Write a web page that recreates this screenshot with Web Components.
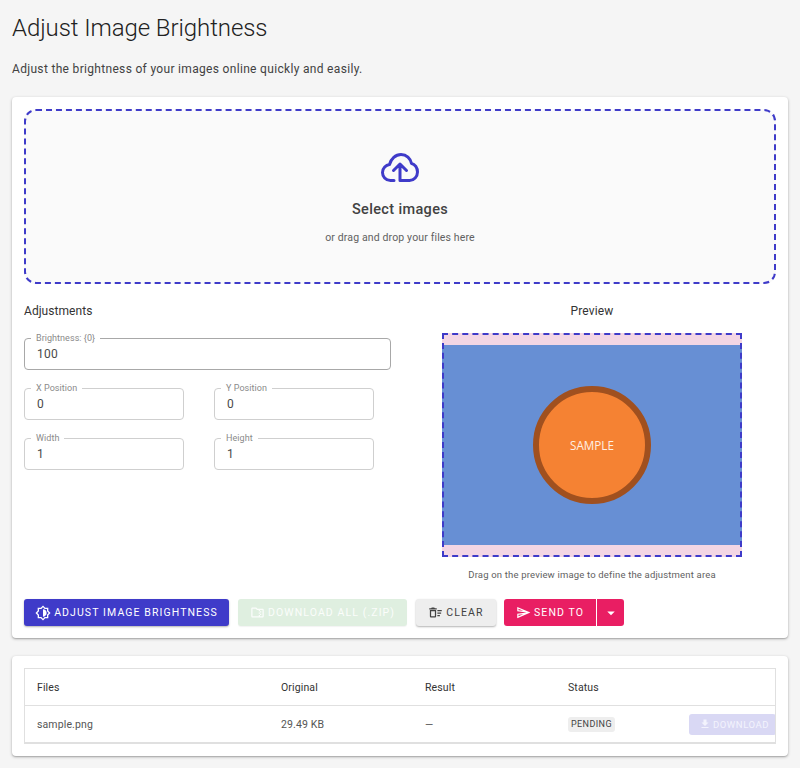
<!DOCTYPE html>
<html lang="en">
<head>
<meta charset="utf-8">
<title>Adjust Image Brightness</title>
<style>
  html, body { margin: 0; background: #f5f5f5; }
  body { font-family: Roboto, "Liberation Sans", sans-serif; color: #212121; height: 768px; overflow: hidden; }
  main { padding: 12px 12px 0; }
  h1 { margin: 0; font-size: 24px; line-height: 32px; font-weight: 300; letter-spacing: -.08px; color: #212121; }
  p.lead { margin: 16px 0 19px; font-size: 12px; line-height: 18px; letter-spacing: .32px; color: #424242; }
  .split { display: grid; grid-template-columns: 368px 368px; column-gap: 16px; margin-top: 18px; }
  .row { display: flex; gap: 30px; margin-top: 18px; }
  .actions { display: flex; align-items: flex-start; margin-top: 16px; }
  h2 { margin: 0 0 18px; font-size: 12px; line-height: 18px; font-weight: 400; letter-spacing: .05px; color: #333; }
</style>
</head>
<body>
<main>
  <h1>Adjust Image Brightness</h1>
  <p class="lead">Adjust the brightness of your images online quickly and easily.</p>

  <app-card>
    <drop-zone></drop-zone>
    <div class="split">
      <section>
        <h2>Adjustments</h2>
        <outlined-field label="Brightness: {0}" value="100" wide></outlined-field>
        <div class="row">
          <outlined-field label="X Position" value="0"></outlined-field>
          <outlined-field label="Y Position" value="0"></outlined-field>
        </div>
        <div class="row">
          <outlined-field label="Width" value="1"></outlined-field>
          <outlined-field label="Height" value="1"></outlined-field>
        </div>
      </section>
      <preview-pane></preview-pane>
    </div>
    <div class="actions">
      <action-button kind="primary" icon="brightness" style="width:205px">Adjust Image Brightness</action-button>
      <action-button kind="success" icon="zip" style="width:169px;margin-left:9px">Download All (.zip)</action-button>
      <action-button kind="plain" icon="sweep" style="width:80px;margin-left:9px">Clear</action-button>
      <send-split style="margin-left:8px"></send-split>
    </div>
  </app-card>

  <app-card style="margin-top:18px">
    <file-table></file-table>
  </app-card>
</main>

<template id="card-tpl">
  <style>
    :host { display: block; background: #fff; border-radius: 4px; padding: 12px; box-shadow: 0 1px 3px rgba(0,0,0,.3), 0 1px 1px rgba(0,0,0,.1); }
  </style>
  <slot></slot>
</template>

<template id="drop-tpl">
  <style>
    :host { display: flex; flex-direction: column; align-items: center; box-sizing: border-box; height: 175px; padding-top: 42px; background: #fafafa; border: 2px dashed #3f3bc9; border-radius: 12px; }
    svg { display: block; width: 38px; height: 30px; }
    strong { margin-top: 17px; font-size: 14.5px; line-height: 20px; font-weight: 500; letter-spacing: .35px; color: #424242; }
    span { margin-top: 10px; font-size: 10.5px; line-height: 16px; letter-spacing: .14px; color: #616161; }
  </style>
  <svg viewBox="0 0 38 30" fill="none" stroke="#3f3bc9" stroke-width="3" stroke-linecap="round" stroke-linejoin="round">
    <path d="M13 27.5H9.5C4.5 27.5 1.5 23.5 1.5 19.5C1.5 15 5 12 8.5 11.5C10 6 14.5 1.5 20 1.5C25.5 1.5 29.5 5.5 30.5 10.5C34 11 36.5 15 36.5 19C36.5 23.5 33 27.5 28.5 27.5H19V11M12.5 17.5L19 11L25.5 17.5"/>
  </svg>
  <strong>Select images</strong>
  <span>or drag and drop your files here</span>
</template>

<template id="field-tpl">
  <style>
    :host { display: block; position: relative; box-sizing: border-box; width: 160px; height: 32px; border: 1px solid #cfcfcf; border-radius: 4px; padding: 7px 12px; font-size: 12px; line-height: 16px; letter-spacing: .3px; color: #4a4a4a; }
    :host([wide]) { width: 367px; border-color: #a8a8a8; }
    label { position: absolute; left: 6px; top: -6px; padding: 0 5px; background: #fff; font-size: 9px; line-height: 11px; letter-spacing: .05px; color: #8a8a8a; }
  </style>
  <label></label><span></span>
</template>

<template id="preview-tpl">
  <style>
    :host { display: flex; flex-direction: column; align-items: center; }
    h2 { margin: 0 0 13px; font-size: 12px; line-height: 18px; font-weight: 400; letter-spacing: .15px; color: #333; }
    .frame { position: relative; width: 300px; height: 224px; padding: 12px 0; box-sizing: border-box; background: #f3d6e4; }
    svg { display: block; width: 300px; height: 200px; }
    .sel { position: absolute; inset: 0; border: 2px dashed #3f3bc9; box-sizing: border-box; }
    p { margin: 10px 0 0; font-size: 9.5px; line-height: 16px; letter-spacing: .17px; color: #616161; }
  </style>
  <h2>Preview</h2>
  <div class="frame">
    <svg viewBox="0 0 300 200">
      <rect width="300" height="200" fill="#678fd4"/>
      <circle cx="150" cy="100" r="56" fill="#f58233" stroke="#a0501f" stroke-width="6"/>
      <text x="150" y="105" text-anchor="middle" font-family="Open Sans, sans-serif" font-size="11.7" fill="#fff0e4">SAMPLE</text>
    </svg>
    <div class="sel"></div>
  </div>
  <p>Drag on the preview image to define the adjustment area</p>
</template>

<template id="button-tpl">
  <style>
    :host { display: inline-flex; align-items: center; justify-content: center; gap: 3px; box-sizing: border-box; height: 27px; border-radius: 3px; font-size: 10.5px; font-weight: 400; letter-spacing: 1.1px; text-transform: uppercase; white-space: nowrap; box-shadow: 0 1px 2px rgba(0,0,0,.3); }
    :host([kind=primary]) { background: #3f3bc9; color: #fff; }
    :host([kind=success]) { background: #dfefe0; color: #fbfdfb; box-shadow: 0 1px 1px rgba(0,0,0,.05); }
    :host([kind=plain]) { background: #eeeeee; color: #424242; }
    :host([kind=pink]) { background: #e91e63; color: #fff; box-shadow: none; }
    :host([kind=ghost]) { justify-content: flex-start; gap: 2px; padding-left: 10px; background: #d9d8f4; color: #f3f3fd; box-shadow: none; height: 21px; font-size: 9.5px; letter-spacing: .55px; }
    svg { display: block; width: 15px; height: 15px; fill: currentColor; flex: none; }
    :host([kind=primary]) svg { width: 16px; height: 16px; }
    :host([kind=ghost]) svg { width: 12px; height: 12px; }
  </style>
  <svg viewBox="0 0 24 24"><path></path></svg><slot></slot>
</template>

<template id="send-tpl">
  <style>
    :host { display: inline-flex; gap: 1px; }
    svg { display: block; width: 18px; height: 18px; fill: #fff; }
    .caret { display: flex; align-items: center; justify-content: center; width: 27px; height: 27px; background: #e91e63; border-radius: 0 3px 3px 0; }
  </style>
  <action-button kind="pink" icon="send" style="width:92px;border-radius:3px 0 0 3px">Send to</action-button>
  <div class="caret"><svg viewBox="0 0 24 24"><path d="M7 10l5 5 5-5z"/></svg></div>
</template>

<template id="table-tpl">
  <style>
    :host { display: block; border: 1px solid #e0e0e0; border-bottom-width: 2px; overflow: hidden; font-size: 10.5px; letter-spacing: .12px; }
    .tr { display: grid; grid-template-columns: 244px 144px 143px 121px 1fr; align-items: center; padding-left: 12px; }
    .head { height: 36px; border-bottom: 1px solid #e0e0e0; color: #333; }
    .body { height: 36px; color: #555; }
    .chip { display: inline-block; padding: 0 3px; border-radius: 3px; background: #eeeeee; font-size: 9px; line-height: 15px; font-weight: 400; letter-spacing: .4px; color: #424242; }
    action-button { width: 87px; margin-left: 0; }
  </style>
  <div class="tr head"><span>Files</span><span>Original</span><span>Result</span><span>Status</span><span></span></div>
  <div class="tr body"><span>sample.png</span><span>29.49 KB</span><span>—</span><span><status-chip class="chip">PENDING</status-chip></span><action-button kind="ghost" icon="download">Download</action-button></div>
</template>

<script>
const ICONS = {
  brightness: "M20 15.31L23.31 12 20 8.69V4h-4.69L12 .69 8.69 4H4v4.69L.69 12 4 15.31V20h4.69L12 23.31 15.31 20H20v-4.69zM18 14.48V18h-3.52L12 20.48 9.52 18H6v-3.52L3.52 12 6 9.52V6h3.52L12 3.52 14.48 6H18v3.52L20.48 12 18 14.48zM12 6.5v11c3.03 0 5.5-2.47 5.5-5.5S15.03 6.5 12 6.5z",
  zip: "M20 6h-8l-2-2H4c-1.1 0-1.99.9-1.99 2L2 18c0 1.1.9 2 2 2h16c1.1 0 2-.9 2-2V8c0-1.1-.9-2-2-2zm-4 10h2v-2h-2v-2h2v-2h-2V8h4v10h-4v-2zm0 0h-2v2H4V6h5.17l2 2H14v2h2v2h-2v2h2v2z",
  sweep: "M15 16h4v2h-4zm0-8h7v2h-7zm0 4h6v2h-6zM3 18c0 1.1.9 2 2 2h6c1.1 0 2-.9 2-2V8H3v10zm2-8h6v8H5v-8zm5-6H6L5 5H2v2h12V5h-3z",
  send: "M4.01 6.03l7.51 3.22-7.52-1 .01-2.22m7.5 8.72L4 17.97v-2.22l7.51-1M2.01 3L2 10l15 2-15 2 .01 7L23 12 2.01 3z",
  download: "M19 9h-4V3H9v6H5l7 7 7-7zM5 18v2h14v-2H5z"
};

// plain elements that only stamp their template
function stamp(tag, id) {
  customElements.define(tag, class extends HTMLElement {
    constructor() {
      super();
      this.attachShadow({ mode: "open" });
      this.shadowRoot.appendChild(document.getElementById(id).content.cloneNode(true));
    }
  });
}

class OutlinedField extends HTMLElement {
  constructor() {
    super();
    this.attachShadow({ mode: "open" });
    this.shadowRoot.appendChild(document.getElementById("field-tpl").content.cloneNode(true));
    this.shadowRoot.querySelector("label").textContent = this.getAttribute("label");
    this.shadowRoot.querySelector("span").textContent = this.getAttribute("value");
  }
}

class ActionButton extends HTMLElement {
  constructor() {
    super();
    this.attachShadow({ mode: "open" });
    this.shadowRoot.appendChild(document.getElementById("button-tpl").content.cloneNode(true));
    this.shadowRoot.querySelector("path").setAttribute("d", ICONS[this.getAttribute("icon")]);
  }
}

class StatusChip extends HTMLElement {
  constructor() {
    super();
    this.attachShadow({ mode: "open" }).innerHTML = "<style>:host{display:inline-block}</style><slot></slot>";
  }
}

customElements.define("action-button", ActionButton);
customElements.define("outlined-field", OutlinedField);
customElements.define("status-chip", StatusChip);
stamp("app-card", "card-tpl");
stamp("drop-zone", "drop-tpl");
stamp("preview-pane", "preview-tpl");
stamp("send-split", "send-tpl");
stamp("file-table", "table-tpl");
</script>
</body>
</html>
